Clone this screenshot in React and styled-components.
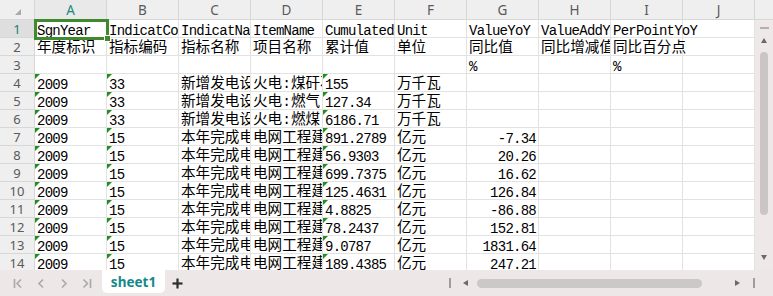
import React from 'react';
import styled, { createGlobalStyle, css } from 'styled-components';

const GlobalStyle = createGlobalStyle`
  html, body { margin: 0; padding: 0; background: #fff; overflow: hidden; }
`;

const COLS = ['A', 'B', 'C', 'D', 'E', 'F', 'G', 'H', 'I', 'J'];

const mk = (a, b, c, d, e, f, g = '', h = '', i = '', j = '') => [a, b, c, d, e, f, g, h, i, j];
const DATA = [
  mk('SgnYear', 'IndicatCode', 'IndicatName', 'ItemName', 'CumulatedValue', 'Unit', 'ValueYoY', 'ValueAddYoY', 'PerPointYoY'),
  mk('年度标识', '指标编码', '指标名称', '项目名称', '累计值', '单位', '同比值', '同比增减值', '同比百分点'),
  mk('', '', '', '', '', '', '%', '', '%'),
  mk('2009', '33', '新增发电设备容量', '火电:煤矸石', '155', '万千瓦'),
  mk('2009', '33', '新增发电设备容量', '火电:燃气', '127.34', '万千瓦'),
  mk('2009', '33', '新增发电设备容量', '火电:燃煤', '6186.71', '万千瓦'),
  mk('2009', '15', '本年完成电网工程建设投资', '电网工程建设投资', '891.2789', '亿元', '-7.34'),
  mk('2009', '15', '本年完成电网工程建设投资', '电网工程建设投资', '56.9303', '亿元', '20.26'),
  mk('2009', '15', '本年完成电网工程建设投资', '电网工程建设投资', '699.7375', '亿元', '16.62'),
  mk('2009', '15', '本年完成电网工程建设投资', '电网工程建设投资', '125.4631', '亿元', '126.84'),
  mk('2009', '15', '本年完成电网工程建设投资', '电网工程建设投资', '4.8825', '亿元', '-86.88'),
  mk('2009', '15', '本年完成电网工程建设投资', '电网工程建设投资', '78.2437', '亿元', '152.81'),
  mk('2009', '15', '本年完成电网工程建设投资', '电网工程建设投资', '9.0787', '亿元', '1831.64'),
  mk('2009', '15', '本年完成电网工程建设投资', '电网工程建设投资', '189.4385', '亿元', '247.21'),
];

const HEAD_BG = '#efefef';
const HEAD_LINE = '#d7d7d7';
const GRID_LINE = '#e2e2e2';
const SEL_GREEN = '#3f8a2f';

const Window = styled.div`
  width: 773px;
  height: 296px;
  display: flex;
  flex-direction: column;
  overflow: hidden;
  background: #fff;
`;

const Main = styled.div`
  display: flex;
  height: 270px;
  flex: none;
`;

const Sheet = styled.div`
  position: relative;
  width: 755px;
  height: 270px;
  overflow: hidden;
  display: grid;
  grid-template-columns: 35px repeat(10, 72px);
  grid-template-rows: 20px;
  grid-auto-rows: 18px;
  align-content: start;
`;

const Corner = styled.div`
  position: relative;
  box-sizing: border-box;
  background: ${HEAD_BG};
  border-right: 1px solid ${HEAD_LINE};
  border-bottom: 1px solid ${HEAD_LINE};
  &::after {
    content: '';
    position: absolute;
    left: 15px;
    top: 9px;
    border-bottom: 6px solid #a9a9a9;
    border-left: 6px solid transparent;
  }
`;

const ColHead = styled.div`
  box-sizing: border-box;
  display: flex;
  align-items: center;
  justify-content: center;
  background: ${p => (p.$active ? '#e9e9e9' : HEAD_BG)};
  border-right: 1px solid ${HEAD_LINE};
  border-bottom: 1px solid ${HEAD_LINE};
  font-family: "Noto Sans", "Open Sans", sans-serif;
  font-size: 13.5px;
  color: ${p => (p.$active ? '#1b8a7c' : '#5a5a5a')};
`;

const RowHead = styled.div`
  box-sizing: border-box;
  display: flex;
  align-items: center;
  justify-content: center;
  background: ${p => (p.$active ? '#dedede' : HEAD_BG)};
  border-right: 1px solid ${HEAD_LINE};
  border-bottom: 1px solid ${HEAD_LINE};
  font-family: "Noto Sans", "Open Sans", sans-serif;
  font-size: 13px;
  color: ${p => (p.$active ? '#1b7f73' : '#5a5a5a')};
`;

const Cell = styled.div`
  position: relative;
  box-sizing: border-box;
  height: 18px;
  border-right: 1px solid ${GRID_LINE};
  border-bottom: 1px solid ${GRID_LINE};
  padding: 3px 2px 0 2px;
  font-family: "Liberation Mono", "Noto Sans CJK SC", monospace;
  font-size: ${p => (p.$cjk ? '14.6px' : '14px')};
  letter-spacing: ${p => (p.$cjk ? '0' : '-0.75px')};
  line-height: ${p => (p.$cjk ? '15px' : '16px')};
  color: #000;
  white-space: nowrap;
  overflow: ${p => (p.$spill ? 'visible' : 'hidden')};
  text-align: ${p => (p.$right ? 'right' : 'left')};
  ${p =>
    p.$flag &&
    css`
      &::before {
        content: '';
        position: absolute;
        left: 0;
        top: 0;
        border-top: 5px solid #1f8f1f;
        border-right: 5px solid transparent;
      }
    `}
`;

const Selection = styled.div`
  position: absolute;
  left: 34px;
  top: 19px;
  width: 75px;
  height: 21px;
  box-sizing: border-box;
  border: 3px solid ${SEL_GREEN};
  pointer-events: none;
  &::after {
    content: '';
    position: absolute;
    right: -5px;
    bottom: -5px;
    width: 5px;
    height: 5px;
    background: ${SEL_GREEN};
    border: 1px solid #fff;
  }
`;

const VScroll = styled.div`
  width: 18px;
  display: flex;
  flex-direction: column;
  align-items: center;
  background: #eee8e8;
`;

const VScrollHead = styled.div`
  align-self: stretch;
  height: 20px;
  box-sizing: border-box;
  background: ${HEAD_BG};
  border-bottom: 1px solid ${HEAD_LINE};
  flex: none;
`;

const Dash = styled.div`
  margin-top: 7px;
  width: 9px;
  height: 2px;
  background: #b4b0b0;
  flex: none;
`;

const Tri = styled.div`
  flex: none;
  width: 0;
  height: 0;
  ${p =>
    p.$dir === 'up' &&
    css`
      border-left: 3.5px solid transparent;
      border-right: 3.5px solid transparent;
      border-bottom: 5px solid #6a6a6a;
    `}
  ${p =>
    p.$dir === 'down' &&
    css`
      border-left: 3.5px solid transparent;
      border-right: 3.5px solid transparent;
      border-top: 5px solid #6a6a6a;
    `}
  ${p =>
    p.$dir === 'left' &&
    css`
      border-top: 3.5px solid transparent;
      border-bottom: 3.5px solid transparent;
      border-right: 5px solid #6a6a6a;
    `}
  ${p =>
    p.$dir === 'right' &&
    css`
      border-top: 3.5px solid transparent;
      border-bottom: 3.5px solid transparent;
      border-left: 5px solid #6a6a6a;
    `}
  margin: ${p => p.$m || '0'};
`;

const VThumb = styled.div`
  flex: none;
  margin-top: 9px;
  width: 8px;
  height: 163px;
  border-radius: 4px;
  background: #cbc6c6;
`;

const Spacer = styled.div`
  flex: 1;
`;

const BottomBar = styled.div`
  height: 26px;
  flex: none;
  display: flex;
  align-items: center;
  background: #eee7e7;
`;

const NavGroup = styled.div`
  display: flex;
  align-items: center;
  padding-left: 6px;
  height: 100%;
`;

const NavBtn = styled.div`
  width: 23px;
  height: 100%;
  display: flex;
  align-items: center;
  justify-content: center;
  color: #a9a9a9;
`;

const Tab = styled.div`
  align-self: flex-start;
  margin-left: 4px;
  width: 63px;
  height: 23px;
  background: #fff;
  border-radius: 0 0 5px 5px;
  display: flex;
  align-items: center;
  justify-content: center;
  font-family: "Noto Sans", "Open Sans", sans-serif;
  font-weight: 700;
  font-size: 13.5px;
  color: #15898a;
`;

const AddBtn = styled.div`
  width: 24px;
  height: 100%;
  display: flex;
  align-items: center;
  justify-content: center;
  color: #2e2e2e;
`;

const HScroll = styled.div`
  width: 328px;
  height: 100%;
  box-sizing: border-box;
  padding-left: 4px;
  display: flex;
  align-items: center;
`;

const Bar = styled.div`
  flex: none;
  width: 2px;
  height: 10px;
  background: #9e9e9e;
  margin-left: ${p => p.$ml || 0}px;
`;

const HTrack = styled.div`
  flex: none;
  margin-left: 9px;
  width: 251px;
  height: 9px;
  display: flex;
`;

const HThumb = styled.div`
  width: 225px;
  height: 100%;
  border-radius: 5px;
  background: #cdc8c8;
`;

const isCJK = t => /[\u4e00-\u9fff]/.test(t);

const NavIcon = ({ kind }) => {
  const paths = {
    first: (
      <>
        <line x1="1.5" y1="1" x2="1.5" y2="10" />
        <polyline points="8,1.5 4,5.5 8,9.5" />
      </>
    ),
    prev: <polyline points="6,1.5 2,5.5 6,9.5" />,
    next: <polyline points="2,1.5 6,5.5 2,9.5" />,
    last: (
      <>
        <polyline points="1.5,1.5 5.5,5.5 1.5,9.5" />
        <line x1="8.5" y1="1" x2="8.5" y2="10" />
      </>
    ),
  };
  const w = kind === 'prev' || kind === 'next' ? 8 : 10;
  return (
    <svg width={w} height="11" viewBox={`0 0 ${w} 11`} fill="none" stroke="currentColor" strokeWidth="1.6">
      {paths[kind]}
    </svg>
  );
};

export default function App() {
  return (
    <>
      <GlobalStyle />
      <Window>
        <Main>
          <Sheet>
            <Corner />
            {COLS.map(c => (
              <ColHead key={c} $active={c === 'A'}>
                {c}
              </ColHead>
            ))}
            {DATA.map((row, ri) => (
              <React.Fragment key={ri}>
                <RowHead $active={ri === 0}>{ri + 1}</RowHead>
                {row.map((text, ci) => {
                  const col = COLS[ci];
                  const next = row[ci + 1];
                  return (
                    <Cell
                      key={col}
                      $cjk={isCJK(text)}
                      $flag={ri >= 3 && (col === 'A' || col === 'B' || col === 'E')}
                      $right={col === 'G' && /^-?\d/.test(text)}
                      $spill={text !== '' && (next === '' || next === undefined)}
                    >
                      {text}
                    </Cell>
                  );
                })}
              </React.Fragment>
            ))}
            <Selection />
          </Sheet>
          <VScroll>
            <VScrollHead />
            <Dash />
            <Tri $dir="up" $m="9px 0 0 0" />
            <VThumb />
            <Spacer />
            <Tri $dir="down" $m="0 0 10px 0" />
          </VScroll>
        </Main>
        <BottomBar>
          <NavGroup>
            <NavBtn><NavIcon kind="first" /></NavBtn>
            <NavBtn><NavIcon kind="prev" /></NavBtn>
            <NavBtn><NavIcon kind="next" /></NavBtn>
            <NavBtn><NavIcon kind="last" /></NavBtn>
          </NavGroup>
          <Tab>sheet1</Tab>
          <AddBtn>
            <svg width="11" height="11" viewBox="0 0 11 11" stroke="currentColor" strokeWidth="2.2">
              <line x1="5.5" y1="0.5" x2="5.5" y2="10.5" />
              <line x1="0.5" y1="5.5" x2="10.5" y2="5.5" />
            </svg>
          </AddBtn>
          <Spacer />
          <HScroll>
            <Bar />
            <Tri $dir="left" $m="0 0 0 12px" />
            <HTrack>
              <HThumb />
            </HTrack>
            <Tri $dir="right" $m="0 0 0 7px" />
            <Bar $ml={13} />
          </HScroll>
        </BottomBar>
      </Window>
    </>
  );
}
